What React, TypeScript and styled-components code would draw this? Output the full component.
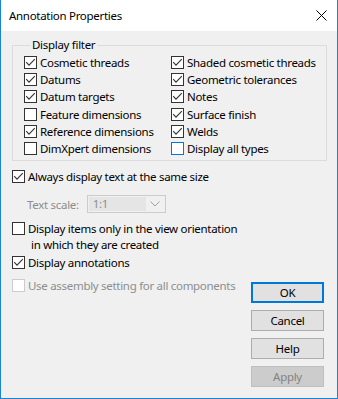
import React from "react";
import styled, { createGlobalStyle } from "styled-components";

const Global = createGlobalStyle`
  html, body { margin: 0; padding: 0; background: #f0f0f0; }
  body { font-family: "Noto Sans", "Open Sans", sans-serif; font-size: 11.5px; letter-spacing: -0.3px; color: #000; }
  * { box-sizing: border-box; }
`;

const Window = styled.div`
  width: 338px;
  height: 399px;
  display: flex;
  flex-direction: column;
  border: 1px solid #1883d7;
  border-top: none;
  background: #f0f0f0;
`;

const TitleBar = styled.div`
  height: 31px;
  background: #fff;
  display: flex;
  align-items: center;
  justify-content: space-between;
  padding: 0 10px 0 8px;
  flex-shrink: 0;
`;

const Title = styled.div`
  font-size: 11.5px;
  padding-bottom: 1px;
`;

const Body = styled.div`
  flex: 1;
  display: flex;
  flex-direction: column;
  padding: 7px 10px 0 11px;
`;

const Group = styled.fieldset`
  margin: 0;
  border: 1px solid #dcdcdc;
  padding: 2px 0 1px 11px;
  height: 123px;
  display: grid;
  grid-template-columns: 147px 1fr;
  grid-template-rows: repeat(6, 17.2px);
  grid-auto-flow: column;
`;

const Legend = styled.legend`
  padding: 0 2px;
  margin-left: 6px;
  line-height: 14px;
`;

const Row = styled.label<{ $disabled?: boolean }>`
  display: flex;
  align-items: center;
  gap: 3px;
  height: 17px;
  color: ${(p) => (p.$disabled ? "#8d8d8d" : "#000")};
  white-space: nowrap;
`;

const Box = styled.span<{ $focus?: boolean; $disabled?: boolean }>`
  width: 13px;
  height: 13px;
  flex-shrink: 0;
  background: #fff;
  border: 1px solid
    ${(p) => (p.$disabled ? "#cccccc" : p.$focus ? "#0078d7" : "#333333")};
  display: flex;
  align-items: center;
  justify-content: center;
`;

const Lower = styled.div`
  display: flex;
  justify-content: space-between;
  padding-top: 7px;
`;

const Options = styled.div`
  display: flex;
  flex-direction: column;
`;

const ScaleRow = styled.div`
  display: flex;
  align-items: center;
  gap: 8px;
  height: 18px;
  margin: 10px 0 7px 15px;
  color: #8d8d8d;
`;

const Combo = styled.div`
  width: 79px;
  height: 18px;
  border: 1px solid #cccccc;
  background: #f0f0f0;
  display: flex;
  align-items: center;
  padding: 1px;
`;

const ComboValue = styled.div`
  width: 57px;
  height: 14px;
  background: #e5e5e5;
  padding-left: 4px;
  line-height: 14px;
  color: #8d8d8d;
`;

const ComboArrow = styled.div`
  flex: 1;
  display: flex;
  justify-content: center;
  align-items: center;
`;

const Multi = styled.div`
  display: flex;
  flex-direction: column;
  margin-bottom: 1px;
`;

const Indented = styled.div`
  padding-left: 19px;
  height: 16px;
  line-height: 16px;
`;

const Gap = styled.div<{ $h: number }>`
  height: ${(p) => p.$h}px;
`;

const Buttons = styled.div`
  display: flex;
  flex-direction: column;
  gap: 7px;
  padding-top: 114px;
  margin-right: 3px;
`;

const Button = styled.button<{ $default?: boolean }>`
  width: 73px;
  height: 21px;
  font-family: inherit;
  font-size: 11.5px;
  letter-spacing: -0.3px;
  color: #000;
  background: #e1e1e1;
  border: ${(p) => (p.$default ? "2px solid #0078d7" : "1px solid #adadad")};
  padding: 0;
  &:disabled {
    background: #cccccc;
    border-color: #bfbfbf;
    color: #838383;
  }
`;

const Check = () => (
  <svg width="11" height="11" viewBox="0 0 11 11">
    <path d="M1.2 5.2 L4 8.2 L9.8 2.2" fill="none" stroke="#333" strokeWidth="1.1" />
  </svg>
);

const CheckBox = ({
  checked,
  focus,
  disabled,
}: {
  checked?: boolean;
  focus?: boolean;
  disabled?: boolean;
}) => (
  <Box $focus={focus} $disabled={disabled}>
    {checked && <Check />}
  </Box>
);

const filters: { label: string; checked: boolean; focus?: boolean }[] = [
  { label: "Cosmetic threads", checked: true },
  { label: "Datums", checked: true },
  { label: "Datum targets", checked: true },
  { label: "Feature dimensions", checked: false },
  { label: "Reference dimensions", checked: true },
  { label: "DimXpert dimensions", checked: false },
  { label: "Shaded cosmetic threads", checked: true },
  { label: "Geometric tolerances", checked: true },
  { label: "Notes", checked: true },
  { label: "Surface finish", checked: true },
  { label: "Welds", checked: true },
  { label: "Display all types", checked: false, focus: true },
];

export default function App() {
  return (
    <>
      <Global />
      <Window>
        <TitleBar>
          <Title>Annotation Properties</Title>
          <svg width="11" height="11" viewBox="0 0 11 11">
            <path d="M0.5 0.5 L10.5 10.5 M10.5 0.5 L0.5 10.5" stroke="#000" strokeWidth="1" />
          </svg>
        </TitleBar>
        <Body>
          <Group>
            <Legend>Display filter</Legend>
            {filters.map((f) => (
              <Row key={f.label}>
                <CheckBox checked={f.checked} focus={f.focus} />
                {f.label}
              </Row>
            ))}
          </Group>
          <Lower>
            <Options>
              <Row>
                <CheckBox checked />
                Always display text at the same size
              </Row>
              <ScaleRow>
                Text scale:
                <Combo>
                  <ComboValue>1:1</ComboValue>
                  <ComboArrow>
                    <svg width="10" height="6" viewBox="0 0 10 6">
                      <path d="M0.5 0.5 L5 5 L9.5 0.5" fill="none" stroke="#a0a0a0" strokeWidth="1" />
                    </svg>
                  </ComboArrow>
                </Combo>
              </ScaleRow>
              <Multi>
                <Row>
                  <CheckBox />
                  Display items only in the view orientation
                </Row>
                <Indented>in which they are created</Indented>
              </Multi>
              <Row>
                <CheckBox checked />
                Display annotations
              </Row>
              <Gap $h={6} />
              <Row $disabled>
                <CheckBox disabled />
                Use assembly setting for all components
              </Row>
            </Options>
            <Buttons>
              <Button $default>OK</Button>
              <Button>Cancel</Button>
              <Button>Help</Button>
              <Button disabled>Apply</Button>
            </Buttons>
          </Lower>
        </Body>
      </Window>
    </>
  );
}
